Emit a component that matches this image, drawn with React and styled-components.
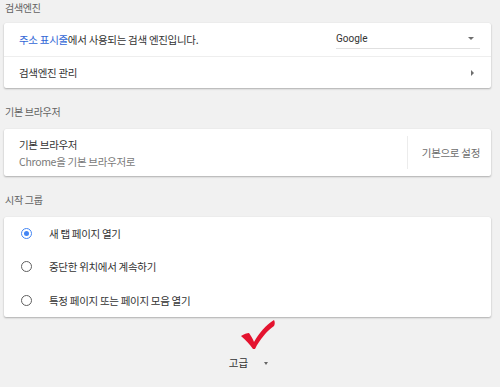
import React from "react";
import styled, { createGlobalStyle } from "styled-components";

const GlobalStyle = createGlobalStyle`
  html, body {
    margin: 0;
    padding: 0;
    background: #f1f1f1;
  }
  body {
    font-family: "Noto Sans CJK KR", Roboto, "Liberation Sans", sans-serif;
    font-size: 10.5px;
    color: #333;
  }
`;

const Page = styled.div`
  width: 487px;
  padding: 0 9px 0 4px;
  height: 387px;
  overflow: hidden;
`;

const SectionTitle = styled.div`
  padding: ${(p) => (p.$first ? "1px" : "17px")} 0 ${(p) => (p.$first ? "8px" : "10px")} 1px;
  line-height: 14px;
  font-size: 10px;
  letter-spacing: -0.3px;
  color: #626262;
`;

const Card = styled.div`
  background: #fff;
  border-radius: 2px;
  box-shadow: 0 1px 2px rgba(0, 0, 0, 0.28), 0 0 1px rgba(0, 0, 0, 0.08);
`;

const Row = styled.div`
  display: flex;
  align-items: center;
  height: ${(p) => p.$h || 33}px;
  padding: 0 11px 0 15px;
  border-top: ${(p) => (p.$divided ? "1px solid #eee" : "none")};
  box-sizing: border-box;
`;

const Label = styled.div`
  flex: 1;
  font-size: 10.5px;
  letter-spacing: -0.3px;
  color: #333;
`;

const Link = styled.span`
  color: #3367d6;
`;

const Select = styled.div`
  position: relative;
  width: 144px;
  height: 16px;
  border-bottom: 1px solid #e0e0e0;
  font-family: Roboto, "Liberation Sans", sans-serif;
  font-size: 10px;
  line-height: 14px;
  color: #333;
  margin-top: 2px;
`;

const DownArrow = styled.span`
  position: absolute;
  right: ${(p) => p.$right ?? 6}px;
  top: 5px;
  width: 0;
  height: 0;
  border-left: 3.5px solid transparent;
  border-right: 3.5px solid transparent;
  border-top: 3.5px solid #6e6e6e;
`;

const RightArrow = styled.span`
  width: 0;
  height: 0;
  margin-right: 6px;
  border-top: 3px solid transparent;
  border-bottom: 3px solid transparent;
  border-left: 3px solid #6e6e6e;
`;

const TwoLine = styled.div`
  flex: 1;
  display: flex;
  flex-direction: column;
  gap: 2px;
  letter-spacing: -0.3px;
`;

const Sub = styled.div`
  color: #7a7a7a;
`;

const Separator = styled.div`
  width: 1px;
  align-self: stretch;
  margin: 7px 0;
  background: #ececec;
`;

const TextButton = styled.div`
  width: 72px;
  text-align: right;
  font-size: 10.5px;
  letter-spacing: -0.3px;
  color: #6d6d6d;
`;

const Radio = styled.span`
  width: 11px;
  height: 11px;
  box-sizing: border-box;
  border-radius: 50%;
  border: 1.5px solid ${(p) => (p.$on ? "#4285f4" : "#5f5f5f")};
  margin: 0 17px 0 2px;
  display: flex;
  align-items: center;
  justify-content: center;
  &::after {
    content: "";
    width: 5px;
    height: 5px;
    border-radius: 50%;
    background: ${(p) => (p.$on ? "#4285f4" : "transparent")};
  }
`;

const Footer = styled.div`
  display: flex;
  justify-content: center;
  padding-top: 40px;
`;

const Advanced = styled.div`
  position: relative;
  display: flex;
  align-items: center;
  gap: 16px;
  font-size: 10.5px;
  color: #333;
  line-height: 12px;
  padding-left: 2px;
`;

const SmallDown = styled.span`
  width: 0;
  height: 0;
  border-left: 2.5px solid transparent;
  border-right: 2.5px solid transparent;
  border-top: 3px solid #666;
`;

const Check = styled.svg`
  position: absolute;
  left: 13px;
  top: -38px;
  width: 36px;
  height: 32px;
`;

export default function App() {
  return (
    <>
      <GlobalStyle />
      <Page>
        <SectionTitle $first>검색엔진</SectionTitle>
        <Card>
          <Row>
            <Label>
              <Link>주소 표시줄</Link>에서 사용되는 검색 엔진입니다.
            </Label>
            <Select>
              Google
              <DownArrow $right={6} />
            </Select>
          </Row>
          <Row $divided $h={32}>
            <Label>검색엔진 관리</Label>
            <RightArrow />
          </Row>
        </Card>

        <SectionTitle>기본 브라우저</SectionTitle>
        <Card>
          <Row $h={47}>
            <TwoLine>
              <div>기본 브라우저</div>
              <Sub>Chrome을 기본 브라우저로</Sub>
            </TwoLine>
            <Separator />
            <TextButton>기본으로 설정</TextButton>
          </Row>
        </Card>

        <SectionTitle>시작 그룹</SectionTitle>
        <Card>
          <Row>
            <Radio $on />
            <Label>새 탭 페이지 열기</Label>
          </Row>
          <Row>
            <Radio />
            <Label>중단한 위치에서 계속하기</Label>
          </Row>
          <Row $h={34}>
            <Radio />
            <Label>특정 페이지 또는 페이지 모음 열기</Label>
          </Row>
        </Card>

        <Footer>
          <Advanced>
            <span>고급</span>
            <SmallDown />
            <Check viewBox="0 0 36 32">
              <path
                d="M1 17 C4 15 7 14 9 14 C11 17 13 20 14 23 C19 14 26 6 34 1 C35 3 35 5 34 7 C27 12 20 20 15 30 L13 30 C10 26 6 21 1 17 Z"
                fill="#e4132f"
              />
            </Check>
          </Advanced>
        </Footer>
      </Page>
    </>
  );
}
